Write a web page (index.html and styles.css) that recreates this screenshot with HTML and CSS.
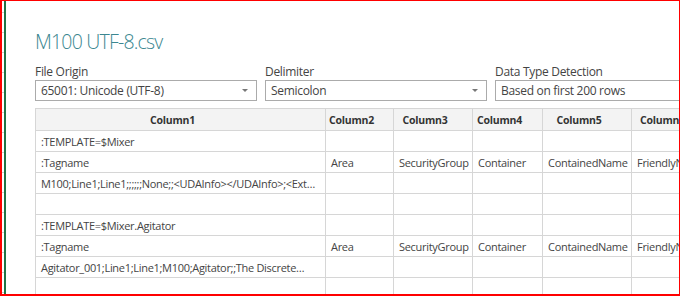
FILE: index.html
```html
<!DOCTYPE html>
<html lang="en">
<head>
    <meta charset="UTF-8">
    <meta name="viewport" content="width=device-width, initial-scale=1.0">
    <title>M100 UTF-8.csv</title>
    <link rel="stylesheet" href="styles.css">
</head>
<body>
    <div class="frame">
        <div class="sheet-edge"></div> <!-- strip of the worksheet behind the dialog -->
        <div class="dialog">
            <h1 class="title">M100 UTF-8.csv</h1>
            <div class="options">
                <div class="option">
                    <label>File Origin</label>
                    <div class="select">65001: Unicode (UTF-8)<span class="arrow"></span></div>
                </div>
                <div class="option">
                    <label>Delimiter</label>
                    <div class="select">Semicolon<span class="arrow"></span></div>
                </div>
                <div class="option">
                    <label>Data Type Detection</label>
                    <div class="select">Based on first 200 rows<span class="arrow"></span></div>
                </div>
            </div>
            <table class="preview">
                <colgroup>
                    <col class="c1"><col class="c2"><col class="c3"><col class="c4"><col class="c5"><col class="c6">
                </colgroup>
                <thead>
                    <tr>
                        <th>Column1</th><th>Column2</th><th>Column3</th><th>Column4</th><th>Column5</th><th>Column6</th>
                    </tr>
                </thead>
                <tbody>
                    <tr><td>:TEMPLATE=$Mixer</td><td></td><td></td><td></td><td></td><td></td></tr>
                    <tr><td>:Tagname</td><td>Area</td><td>SecurityGroup</td><td>Container</td><td>ContainedName</td><td>FriendlyName</td></tr>
                    <tr><td>M100;Line1;Line1;;;;;;None;;&lt;UDAInfo&gt;&lt;/UDAInfo&gt;;&lt;Ext…</td><td></td><td></td><td></td><td></td><td></td></tr>
                    <tr><td></td><td></td><td></td><td></td><td></td><td></td></tr>
                    <tr><td>:TEMPLATE=$Mixer.Agitator</td><td></td><td></td><td></td><td></td><td></td></tr>
                    <tr><td>:Tagname</td><td>Area</td><td>SecurityGroup</td><td>Container</td><td>ContainedName</td><td>FriendlyName</td></tr>
                    <tr><td>Agitator_001;Line1;Line1;M100;Agitator;;The Discrete…</td><td></td><td></td><td></td><td></td><td></td></tr>
                    <tr><td></td><td></td><td></td><td></td><td></td><td></td></tr>
                </tbody>
            </table>
        </div>
    </div>
</body>
</html>
```

FILE: styles.css
```css
body {
    margin: 0;
    font-family: "Open Sans", "Noto Sans", sans-serif;
    color: #444;
    background-color: white;
}
.frame {
    display: flex;
    width: 680px;
    height: 296px;
    box-sizing: border-box;
    border: 1px solid #ff0000; /* red outline of the capture */
    border-left-width: 2px;
    border-bottom-width: 2px;
    overflow: hidden;
}
.sheet-edge {
    flex: 0 0 2px;
    background: repeating-linear-gradient(#fff 0 11px, #d0d0d0 11px 12px, #fff 12px 20px);
    border-right: 2px solid #217346; /* Excel green selection edge */
}
.dialog {
    flex: 1;
    padding: 0 0 0 29px;
    overflow: hidden;
    min-width: 0;
}
.title {
    margin: 27px 0 0;
    font-size: 19.5px;
    font-weight: 300;
    letter-spacing: -0.8px;
    line-height: 28px;
    color: #3b8790;
    white-space: nowrap;
}
.options {
    display: flex;
    gap: 8px;
    margin-top: 7px;
}
.option {
    flex: 0 0 222px;
}
.option label {
    display: block;
    font-size: 12px;
    letter-spacing: -0.3px;
    line-height: 17px;
    color: #444;
}
.select {
    position: relative;
    height: 21px;
    line-height: 19px;
    padding: 0 0 0 5px;
    box-sizing: border-box;
    border: 1px solid #ababab;
    font-size: 12px;
    letter-spacing: -0.3px;
    white-space: nowrap;
}
.arrow {
    position: absolute;
    right: 8px;
    top: 8px;
    border-left: 3px solid transparent;
    border-right: 3px solid transparent;
    border-top: 3px solid #777;
}
.preview {
    margin-top: 7px;
    border-collapse: collapse;
    table-layout: fixed;
    width: 674px;
    font-size: 11px;
    letter-spacing: -0.3px;
}
.c1 { width: 290px; }
.c2 { width: 68px; }
.c3 { width: 79px; }
.c4 { width: 70px; }
.c5 { width: 89px; }
.c6 { width: 78px; }
.preview th,
.preview td {
    border: 1px solid #d6d6d6;
    padding: 0 0 0 5px;
    white-space: nowrap;
    overflow: hidden;
    text-align: left;
    color: #444;
}
.preview th {
    height: 21px;
    padding: 0 16px 0 0;
    background-color: #f3f3f3;
    font-weight: bold;
    font-size: 10.5px;
    letter-spacing: -0.2px;
    text-align: center;
    color: #333;
}
.preview td {
    height: 20px;
}
```
